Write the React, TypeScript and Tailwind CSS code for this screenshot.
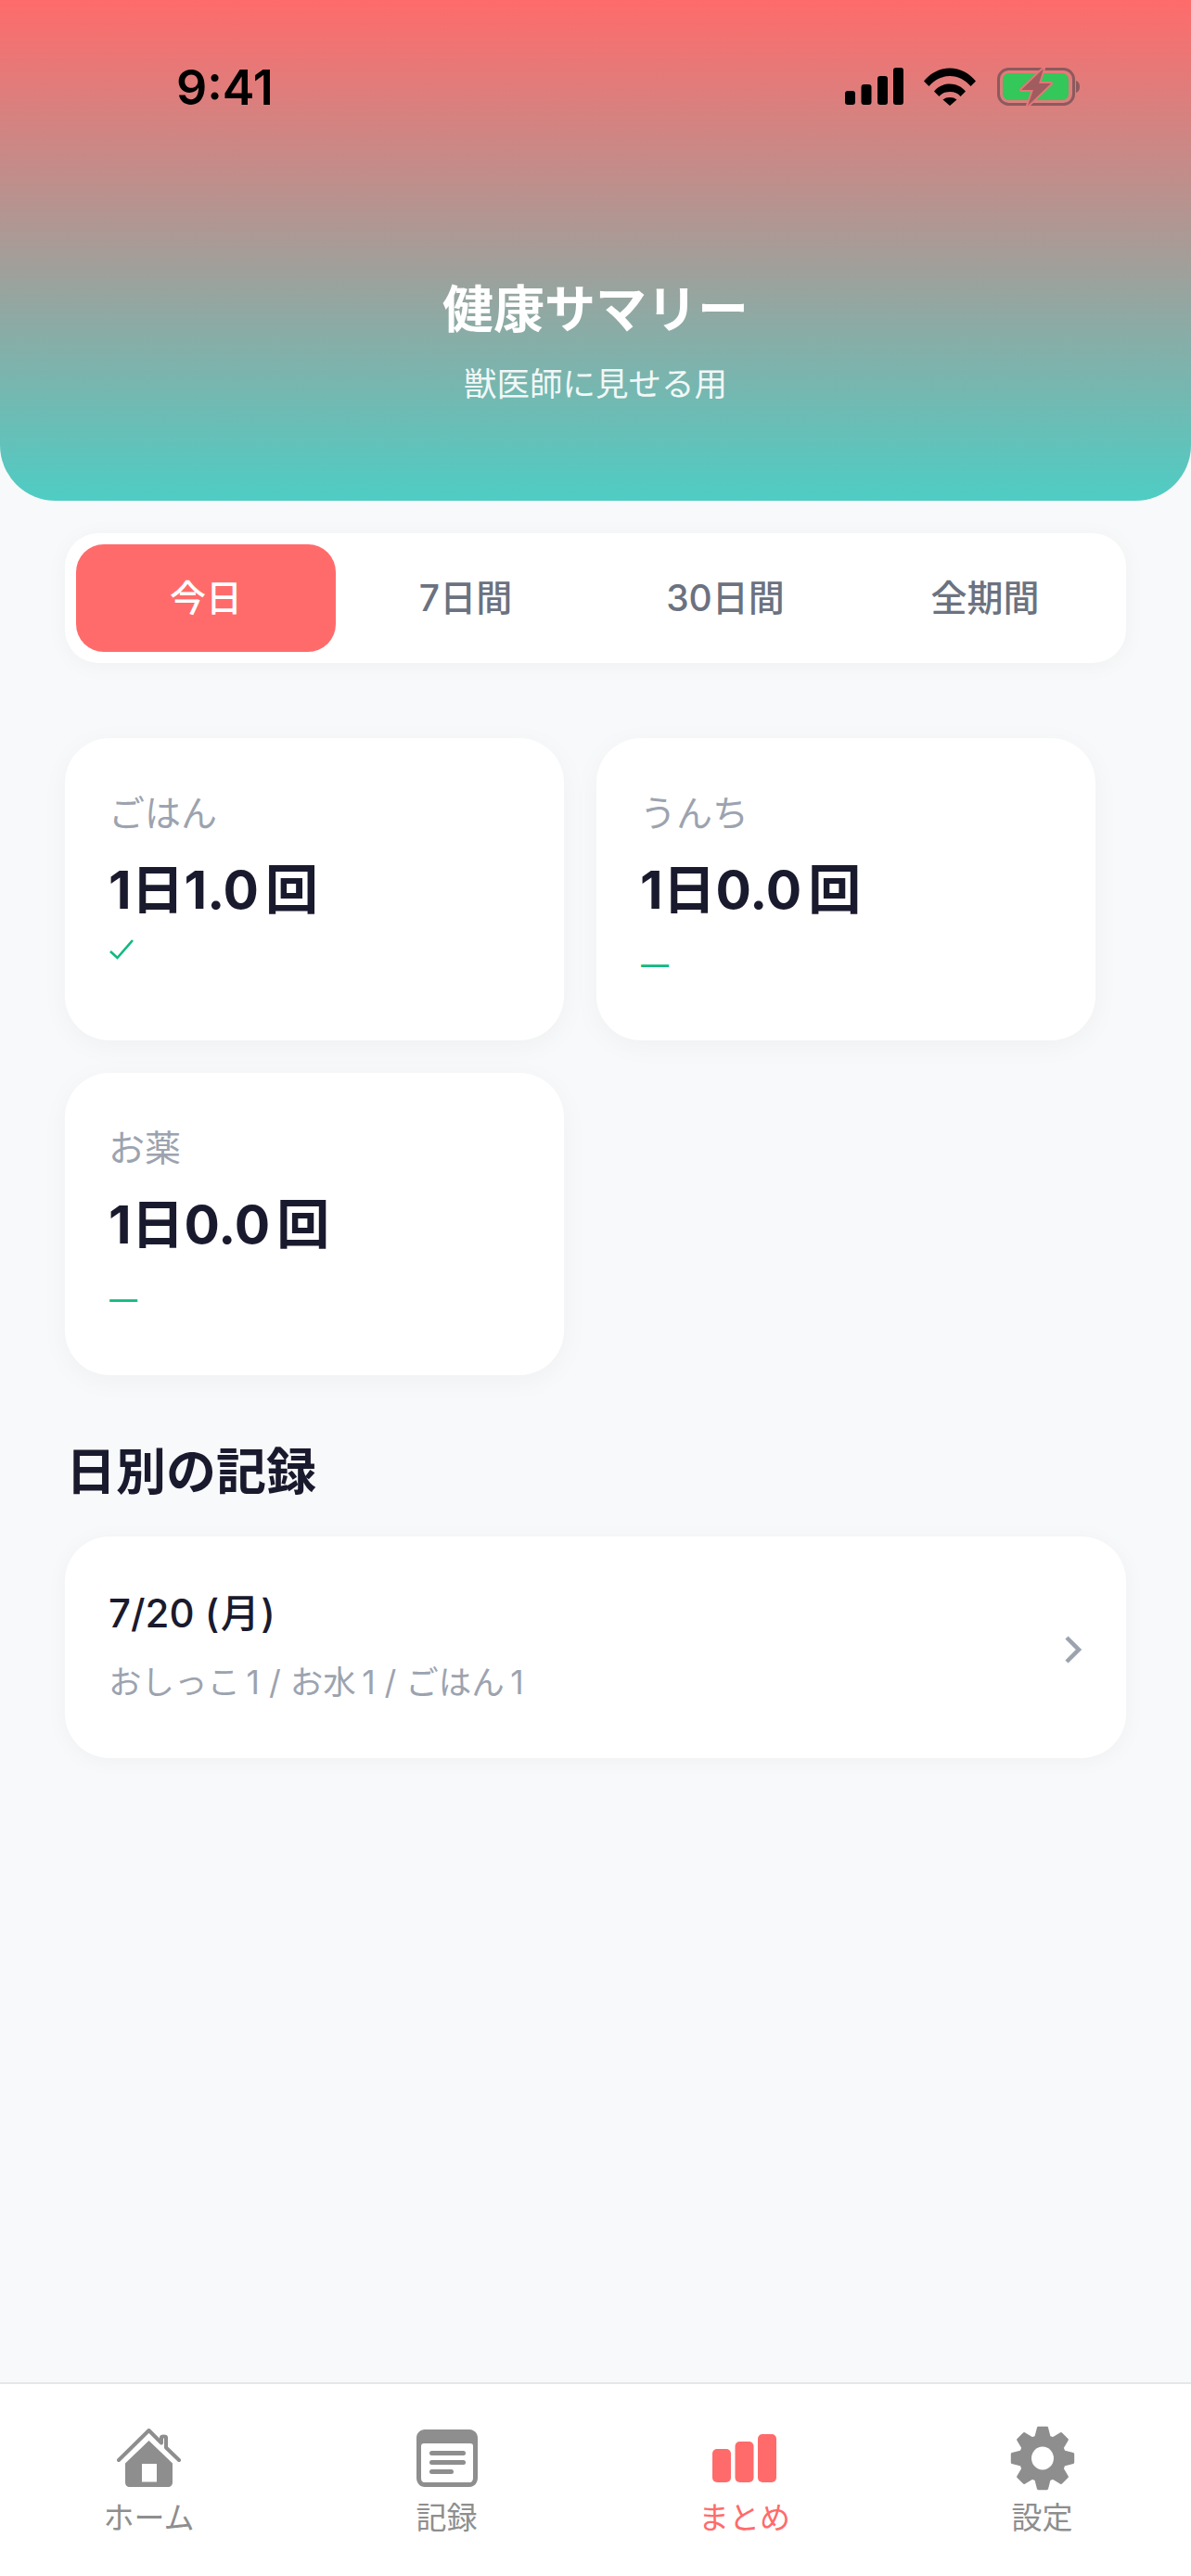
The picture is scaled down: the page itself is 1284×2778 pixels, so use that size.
import React from 'react';

const StatusIcons = () => (
  <div className="flex items-center">
    <svg width="64" height="42" viewBox="0 0 64 42" fill="#000">
      <rect x="0" y="25" width="11" height="15" rx="3" />
      <rect x="17.5" y="18" width="11" height="22" rx="3" />
      <rect x="35" y="9" width="11" height="31" rx="3" />
      <rect x="52" y="0" width="11" height="40" rx="3" />
    </svg>
    <svg className="ml-[21px]" width="56" height="42" viewBox="0 0 56 42" fill="#000">
      <path d="M0 14.5C7 6 17 0.5 28 0.5S49 6 56 14.5L50.5 20C45 13.5 37 9 28 9S11 13.5 5.500 20Z" />
      <path d="M11 25.500C15 20.500 21 17.500 28 17.500S41 20.500 45 25.500L39.500 31C37 27.800 33 26 28 26S19 27.800 16.500 31Z" />
      <path d="M20.500 34.500C22.500 32.800 25 32 28 32S33.500 32.800 35.500 34.500L28 41Z" />
    </svg>
    <svg className="ml-[23px]" width="90" height="42" viewBox="0 0 90 42">
      <rect x="1.500" y="1.500" width="81" height="38" rx="11" fill="none" stroke="#8c5a5e" strokeWidth="3" />
      <rect x="6" y="6" width="71" height="29" rx="6.500" fill="#34c759" />
      <path d="M85 14C88 15 89 17.500 89 20.500S88 26 85 27Z" fill="#8c5a5e" />
      <path d="M50 1L26 24H39L33 41L58 17H45Z" fill="#a05c5e" stroke="#e37778" strokeWidth="4" strokeLinejoin="round" paintOrder="stroke" />
    </svg>
  </div>
);

const CheckIcon = () => (
  <svg width="26" height="22" viewBox="0 0 26 22" fill="none" stroke="#10b981" strokeWidth="2.600">
    <path d="M1 13L8.500 20L25 1" />
  </svg>
);

const HomeIcon = ({ color }: { color: string }) => (
  <svg width="70" height="64" viewBox="0 0 70 64" fill={color}>
    <path d="M2 34L34.500 2L48 15.500V9.500C48 8 53 8 53 9.500V20.500L67 34" fill="none" stroke={color} strokeWidth="4" strokeLinecap="round" strokeLinejoin="round" />
    <path fillRule="evenodd" d="M34.500 13L60 37.500V58C60 61 58 63 55 63H14C11 63 9 61 9 58V37.500ZM27 38V57.500H43V38Z" />
  </svg>
);

const RecordIcon = ({ color }: { color: string }) => (
  <svg width="66" height="62" viewBox="0 0 66 62" fill={color}>
    <path fillRule="evenodd" d="M9 0H57C62 0 66 4 66 9V52C66 58 62 62 57 62H9C4 62 0 58 0 52V9C0 4 4 0 9 0ZM8 15C6 15 5 16 5 18V52C5 55 6 57 9 57H57C60 57 61 55 61 52V18C61 16 60 15 58 15Z" />
    <rect x="14" y="23" width="39" height="5" rx="2.500" />
    <rect x="14" y="33" width="39" height="5" rx="2.500" />
    <rect x="14" y="43" width="26" height="5" rx="2.500" />
  </svg>
);

const ChartIcon = ({ color }: { color: string }) => (
  <svg width="70" height="54" viewBox="0 0 70 54" fill={color}>
    <rect x="0" y="17" width="20" height="36" rx="5" />
    <rect x="24.500" y="9" width="20" height="44" rx="5" />
    <rect x="49" y="1" width="20" height="52" rx="5" />
  </svg>
);

const gearPath = () => {
  // 8 teeth, one pointing straight up
  const pts: string[] = [];
  const cx = 35;
  const cy = 35;
  for (let i = 0; i < 8; i++) {
    const a = (i * Math.PI) / 4 - Math.PI / 2;
    const rows: [number, number][] = [
      [-0.3, 24],
      [-0.14, 33],
      [0.14, 33],
      [0.3, 24],
    ];
    rows.forEach(([d, r]) => {
      pts.push(`${(cx + Math.cos(a + d) * r).toFixed(1)} ${(cy + Math.sin(a + d) * r).toFixed(1)}`);
    });
  }
  return `M${pts.join('L')}Z`;
};

const GearIcon = ({ color }: { color: string }) => (
  <svg width="70" height="70" viewBox="0 0 70 70">
    <path d={gearPath()} fill={color} stroke={color} strokeWidth="3" strokeLinejoin="round" />
    <ellipse cx="35" cy="35" rx="12" ry="12.500" fill="#fff" />
  </svg>
);

const tabs = ['今日', '7日間', '30日間', '全期間'];

const stats = [
  { label: 'ごはん', value: '1日1.0', ok: true },
  { label: 'うんち', value: '1日0.0', ok: false },
  { label: 'お薬', value: '1日0.0', ok: false },
];

const nav = [
  { label: 'ホーム', Icon: HomeIcon, active: false },
  { label: '記録', Icon: RecordIcon, active: false },
  { label: 'まとめ', Icon: ChartIcon, active: true },
  { label: '設定', Icon: GearIcon, active: false },
];

const App = () => {
  return (
    <div className="min-h-[2778px] w-full bg-[#f8f9fa] flex flex-col font-['Inter','Noto_Sans_CJK_JP',sans-serif]">
      {/* Header */}
      <header className="h-[540px] rounded-b-[60px] bg-[linear-gradient(180deg,#ff6b6b,#4ecdc4)] flex flex-col shrink-0">
        <div className="h-[293px] flex items-start justify-between pt-[65px] pl-[190px] pr-[119px]">
          <span className="text-[52px] leading-[60px] font-semibold text-black">9:41</span>
          <div className="pt-[8px]"><StatusIcons /></div>
        </div>
        <div className="flex flex-col items-center text-white">
          <h1 className="text-[55px] leading-[80px] font-bold">健康サマリー</h1>
          <p className="text-[35.5px] leading-[50px] mt-[17px] opacity-90">獣医師に見せる用</p>
        </div>
      </header>

      {/* Period tabs */}
      <div className="mt-[35px] mx-[70px] h-[140px] p-[12px] bg-white rounded-[36px] shadow-[0_3px_24px_rgba(0,0,0,0.04)] grid grid-cols-4">
        {tabs.map((t, i) => (
          <div
            key={t}
            className={`flex items-center justify-center rounded-[30px] text-[39px] font-medium ${i === 0 ? 'bg-[#ff6b6b] text-white' : 'text-[#6b7280]'}`}
          >
            {t}
          </div>
        ))}
      </div>

      {/* Stat cards */}
      <div className="mt-[81px] mx-[70px] flex flex-wrap gap-[35px]">
        {stats.map((s) => (
          <div key={s.label} className="w-[538px] h-[326px] bg-white rounded-[48px] shadow-[0_6px_30px_rgba(0,0,0,0.04)] pl-[48px] pt-[53px]">
            <div className="text-[39px] leading-[56px] text-[#9ca3af] -ml-[1px]">{s.label}</div>
            <div className="text-[57px] leading-[80px] mt-[15px] font-bold text-[#1a1a2e] -ml-[1px]">
              {s.value}
              <span className="ml-[7px]">回</span>
            </div>
            <div className="h-[40px] mt-[4px] flex items-center">
              {s.ok ? <CheckIcon /> : <span className="mt-[32px] text-[30px] leading-[40px] font-medium text-[#10b981]">—</span>}
            </div>
          </div>
        ))}
      </div>

      {/* Daily list */}
      <h2 className="mt-[70px] ml-[71px] text-[54px] leading-[70px] font-bold text-[#1a1a2e]">日別の記録</h2>
      <div className="mt-[34px] mx-[70px] h-[239px] bg-white rounded-[48px] shadow-[0_3px_24px_rgba(0,0,0,0.04)] flex items-center justify-between pl-[47px] pr-[48px]">
        <div>
          <div className="text-[42px] leading-[60px] font-medium text-[#1a1a2e] -mt-[4px]">
            7/20 <span className="tracking-[1.5px]">(月)</span>
          </div>
          <div className="text-[35.500px] leading-[50px] mt-[20px] text-[#9ca3af]">おしっこ{'\u2009'}1 / お水{'\u2009'}1 / ごはん{'\u2009'}1</div>
        </div>
        <svg className="mt-[5px]" width="18" height="30" viewBox="0 0 18 30" fill="none" stroke="#9ca3af" strokeWidth="4.500">
          <path d="M2 2L15 15L2 28" />
        </svg>
      </div>

      {/* Bottom nav */}
      <nav className="mt-auto h-[209px] bg-white border-t-2 border-[#e5e7eb] grid grid-cols-4 pt-[40px]">
        {nav.map(({ label, Icon, active }) => {
          const color = active ? '#ff6b6b' : '#8e8e8e';
          return (
            <div key={label} className="flex flex-col items-center">
              <div className="h-[80px] flex items-center justify-center">
                <Icon color={color} />
              </div>
              <span className={`text-[33px] leading-[44px] mt-[2px] ${active ? 'text-[#ff6b6b]' : 'text-[#8e8e8e]'}`}>{label}</span>
            </div>
          );
        })}
      </nav>
    </div>
  );
};

export default App;
